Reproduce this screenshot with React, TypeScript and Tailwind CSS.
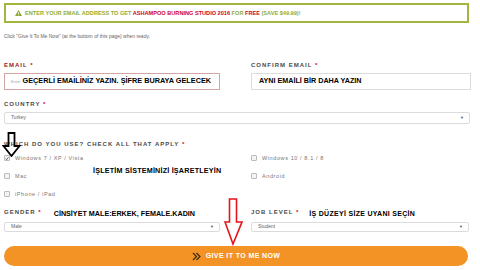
import React from "react";

const Star = () => <span className="text-[#d0021b]"> *</span>;

function Label({ text, danger }: { text: string; danger?: boolean }) {
  return (
    <span
      className={`text-[6px] font-bold tracking-[1px] uppercase whitespace-nowrap ${
        danger ? "text-[#9b1b1b]" : "text-[#4a4a4a]"
      }`}
    >
      {text}
      <Star />
    </span>
  );
}

function Select({ value, className = "" }: { value: string; className?: string }) {
  return (
    <div
      className={`flex items-center justify-between border border-[#dcdcdc] rounded-[2px] pl-[6px] pr-[5px] text-[5px] text-[#666] ${className}`}
    >
      <span>{value}</span>
      <span className="text-[4px] text-[#555]">▼</span>
    </div>
  );
}

function Check({ label, checked }: { label: string; checked?: boolean }) {
  return (
    <div className="flex items-center h-[8px] gap-[5px]">
      <span className="w-[6px] h-[6px] border border-[#bbb] rounded-[1px] bg-[#f4f4f4] flex items-center justify-center">
        {checked && (
          <svg width="5" height="5" viewBox="0 0 10 10">
            <path d="M1.5 5.5 L4 8 L8.5 2" stroke="#333" strokeWidth="1.8" fill="none" />
          </svg>
        )}
      </span>
      <span className="text-[5.5px] tracking-[0.6px] text-[#777]">{label}</span>
    </div>
  );
}

export default function App() {
  return (
    <div className="relative w-[480px] h-[270px] bg-white overflow-hidden font-['Liberation_Sans',Arial,sans-serif]">
      <div className="pt-[3px] pl-[4px]">
        {/* banner */}
        <div className="w-[465px] h-[20px] border-2 border-[#a3b53d] flex items-center pl-[9px] gap-[3px]">
          <svg width="7" height="6" viewBox="0 0 14 12">
            <path d="M7 0 L14 12 L0 12 Z" fill="#8da92e" />
            <rect x="6.2" y="4" width="1.6" height="4.5" fill="#fff" />
            <rect x="6.2" y="9.3" width="1.6" height="1.5" fill="#fff" />
          </svg>
          <span className="text-[5.6px] font-bold whitespace-nowrap text-[#93ad30]">
            ENTER YOUR EMAIL ADDRESS TO GET{" "}
            <span className="text-[#d0021b]">ASHAMPOO BURNING STUDIO 2016</span> FOR{" "}
            <span className="text-[#d0021b]">FREE</span> (SAVE $49.99)!
          </span>
        </div>

        <p className="mt-[9px] h-[8px] leading-[8px] text-[5px] text-[#666]">
          Click "Give It To Me Now" (at the bottom of this page) when ready.
        </p>

        {/* email row */}
        <div className="mt-[18px] grid grid-cols-[216px_220px] gap-x-[31px]">
          <div>
            <div className="h-[8px] leading-[8px]">
              <Label text="Email" danger />
            </div>
            <div className="mt-[7px] h-[17px] border border-[#d5a4a4] flex items-center pl-[6px] gap-[2px] overflow-hidden">
              <span className="text-[4px] text-[#aaa]">Enter</span>
              <span className="text-[7.3px] font-bold text-black whitespace-nowrap">
                GEÇERLİ EMAİLİNİZ YAZIN. ŞİFRE BURAYA GELECEK
              </span>
            </div>
          </div>
          <div>
            <div className="h-[8px] leading-[8px]">
              <Label text="Confirm Email" />
            </div>
            <div className="mt-[7px] h-[17px] border border-[#dcdcdc] flex items-center pl-[7px]">
              <span className="text-[7.2px] font-bold text-black whitespace-nowrap">AYNI EMAİLİ BİR DAHA YAZIN</span>
            </div>
          </div>
        </div>

        {/* country */}
        <div className="mt-[7px] h-[8px] leading-[8px]">
          <Label text="Country" />
        </div>
        <Select value="Turkey" className="mt-[7px] h-[12px] w-[466px]" />

        {/* platforms */}
        <div className="mt-[13px] h-[8px] leading-[8px]">
          <Label text="Which do you use? Check all that apply" />
        </div>
        <div className="mt-[9px] grid grid-cols-[216px_220px] gap-x-[31px]">
          <div className="flex flex-col gap-[10px]">
            <Check label="Windows 7 / XP / Vista" checked />
            <Check label="Mac" />
            <Check label="iPhone / iPad" />
          </div>
          <div className="flex flex-col gap-[10px]">
            <Check label="Windows 10 / 8.1 / 8" />
            <Check label="Android" />
          </div>
        </div>

        {/* gender / job */}
        <div className="mt-[10px] grid grid-cols-[216px_218px] gap-x-[31px]">
          <div>
            <div className="h-[8px] leading-[8px] flex items-center">
              <Label text="Gender" />
              <span className="ml-[12px] mt-[3px] text-[7.2px] font-bold text-black whitespace-nowrap">
                CİNSİYET MALE:ERKEK, FEMALE.KADIN
              </span>
            </div>
            <Select value="Male" className="mt-[6px] h-[10px]" />
          </div>
          <div>
            <div className="h-[8px] leading-[8px] flex items-center">
              <Label text="Job Level" />
              <span className="ml-[10px] mt-[3px] text-[7px] font-bold tracking-[0.3px] text-black whitespace-nowrap">
                İŞ DÜZEYİ SİZE UYANI SEÇİN
              </span>
            </div>
            <Select value="Student" className="mt-[6px] h-[10px]" />
          </div>
        </div>

        <button className="mt-[14px] w-[464px] h-[20px] rounded-full bg-[#f39325] flex items-center justify-center gap-[4px]">
          <svg width="10" height="9" viewBox="0 0 20 18">
            <path d="M2 2 L9 9 L2 16 M9 2 L16 9 L9 16" stroke="#3a2a12" strokeWidth="2.4" fill="none" />
          </svg>
          <span className="text-[7px] font-bold tracking-[0.4px] text-white">GIVE IT TO ME NOW</span>
        </button>
      </div>

      {/* annotation overlays */}
      <span className="absolute left-[93px] top-[166px] text-[7.2px] font-bold text-black tracking-[0.2px] whitespace-nowrap">
        İŞLETİM SİSTEMİNİZİ İŞARETLEYİN
      </span>
      <svg className="absolute left-[2px] top-[132px]" width="19" height="25" viewBox="0 0 19 25">
        <path
          d="M6.5 1 H12.5 V14 H17.5 L9.5 24 L1.5 14 H6.5 Z"
          stroke="#000"
          strokeWidth="1.8"
          fill="none"
        />
      </svg>
      <svg className="absolute left-[224px] top-[198px]" width="19" height="48" viewBox="0 0 19 48">
        <path
          d="M5.5 1 H12.5 V24 H18 L9 46 L1 24 H5.5 Z"
          stroke="#e3141b"
          strokeWidth="1.6"
          fill="white"
        />
      </svg>
    </div>
  );
}
